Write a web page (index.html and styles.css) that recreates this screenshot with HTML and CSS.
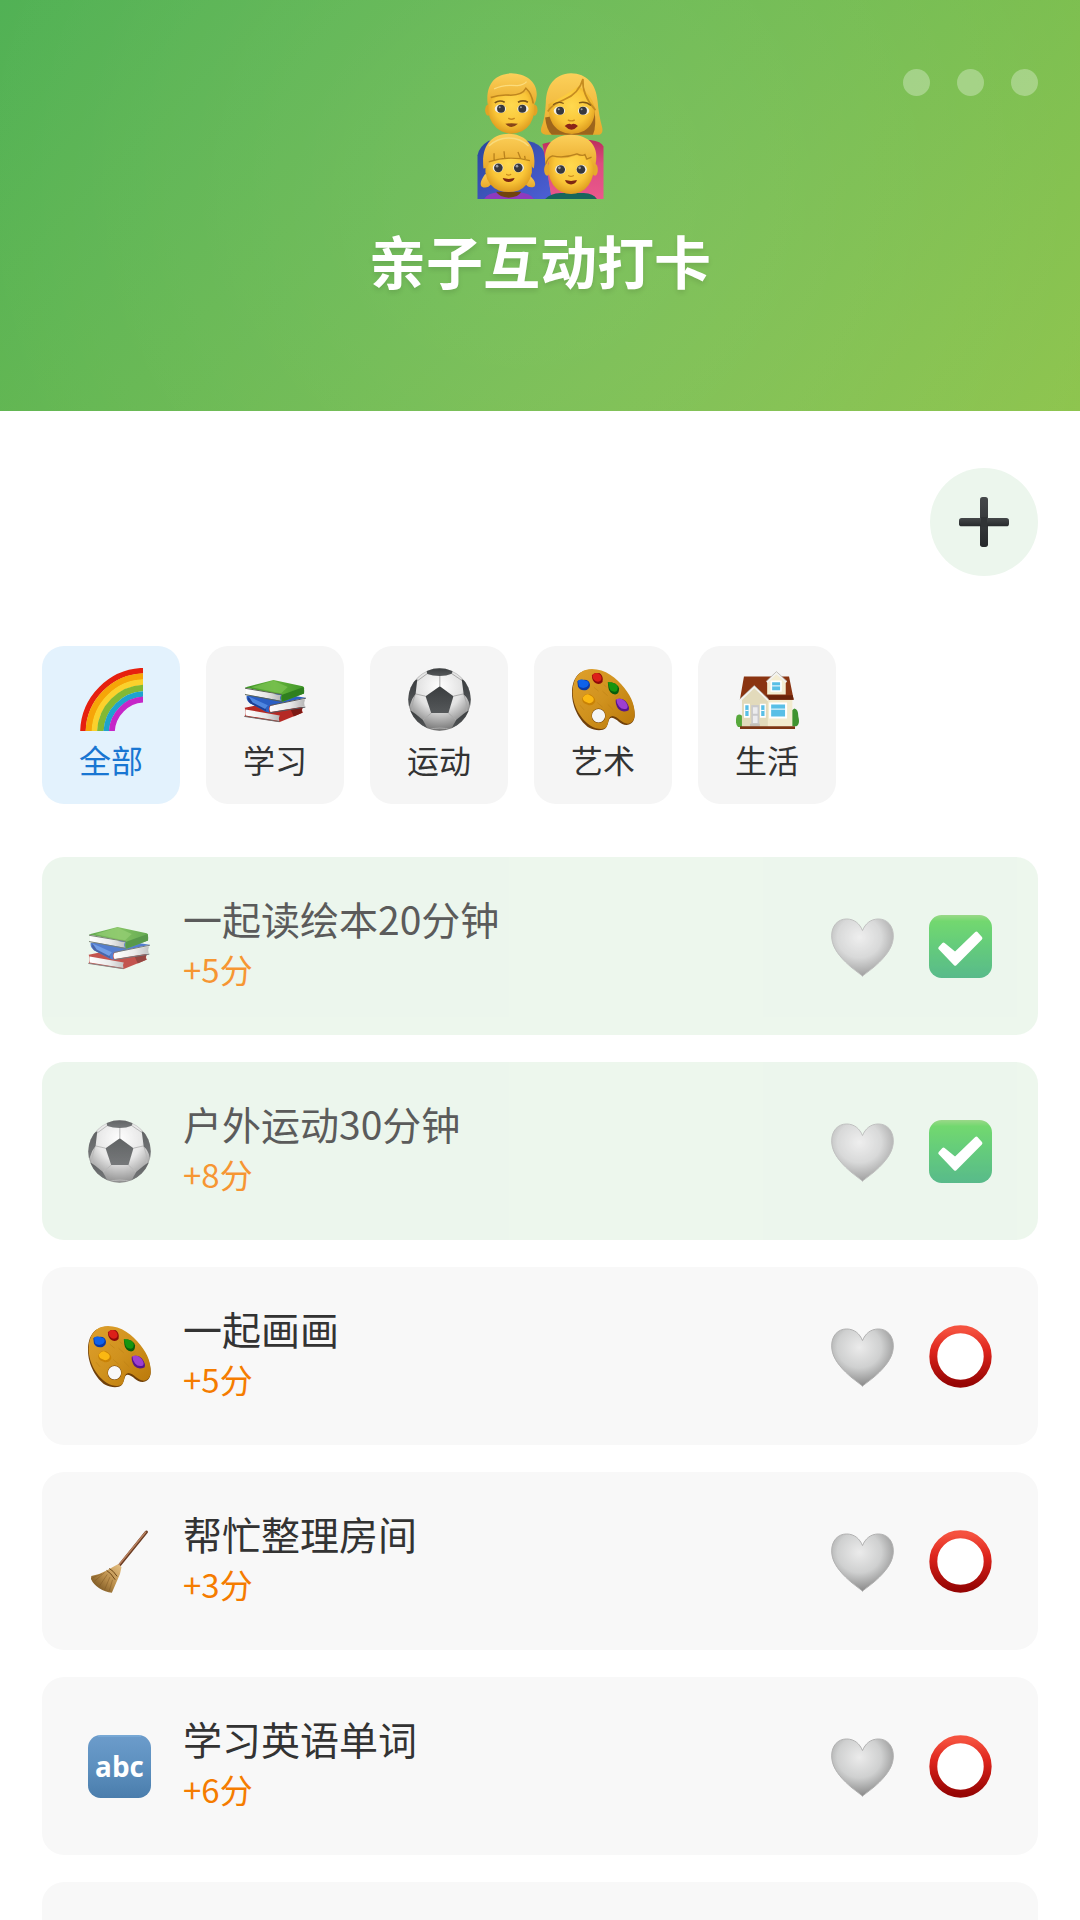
FILE: index.html
```html
<!DOCTYPE html>
<html lang="zh-CN">
<head>
    <meta charset="UTF-8">
    <meta name="viewport" content="width=device-width, initial-scale=1.0">
    <title>亲子互动打卡</title>
    <link rel="stylesheet" href="styles.css">
</head>
<body>
    <!-- shared icons -->
    <svg class="sprite" aria-hidden="true">
        <defs>
            <linearGradient id="g-check" x1="0" y1="0" x2="0" y2="1">
                <stop offset="0" stop-color="#82cf6c"/>
                <stop offset=".1" stop-color="#50cf4c"/>
                <stop offset=".45" stop-color="#40c15a"/>
                <stop offset="1" stop-color="#2faa6e"/>
            </linearGradient>
            <linearGradient id="g-ring" x1="0" y1="0" x2="0" y2="1">
                <stop offset="0" stop-color="#f5523f"/>
                <stop offset=".4" stop-color="#dd241c"/>
                <stop offset="1" stop-color="#960504"/>
            </linearGradient>
            <radialGradient id="g-heart" cx=".45" cy=".32" r=".65">
                <stop offset="0" stop-color="#ebebeb"/>
                <stop offset=".55" stop-color="#cfd0d0"/>
                <stop offset="1" stop-color="#8f8f8f"/>
            </radialGradient>
            <radialGradient id="g-ball" cx=".5" cy=".3" r=".72">
                <stop offset="0" stop-color="#ffffff"/>
                <stop offset=".5" stop-color="#e2e2e2"/>
                <stop offset="1" stop-color="#707070"/>
            </radialGradient>
            <linearGradient id="g-patch" x1="0" y1="0" x2="0" y2="1">
                <stop offset="0" stop-color="#3a3d3f"/>
                <stop offset="1" stop-color="#55585a"/>
            </linearGradient>
            <linearGradient id="g-wood" x1="0" y1="0" x2="1" y2="1">
                <stop offset="0" stop-color="#dfa02c"/>
                <stop offset=".5" stop-color="#d0921e"/>
                <stop offset="1" stop-color="#b97709"/>
            </linearGradient>
            <linearGradient id="g-page" x1="0" y1="0" x2="1" y2="0">
                <stop offset="0" stop-color="#ffffff"/>
                <stop offset=".6" stop-color="#e6e6e6"/>
                <stop offset="1" stop-color="#b4b4b4"/>
            </linearGradient>
            <linearGradient id="g-green" x1="0" y1="0" x2="1" y2="0">
                <stop offset="0" stop-color="#3a9424"/>
                <stop offset=".5" stop-color="#66b43c"/>
                <stop offset="1" stop-color="#3f9628"/>
            </linearGradient>
            <linearGradient id="g-plus" x1="0" y1="0" x2="0" y2="1">
                <stop offset="0" stop-color="#45484a"/>
                <stop offset="1" stop-color="#26292b"/>
            </linearGradient>
            <linearGradient id="g-abc" x1="0" y1="0" x2="0" y2="1">
                <stop offset="0" stop-color="#6c9ccb"/>
                <stop offset=".5" stop-color="#5d90bf"/>
                <stop offset="1" stop-color="#4a7dac"/>
            </linearGradient>
            <linearGradient id="g-straw" x1="1" y1="0" x2="0" y2="1">
                <stop offset="0" stop-color="#e6c184"/>
                <stop offset=".5" stop-color="#b98d4a"/>
                <stop offset="1" stop-color="#604012"/>
            </linearGradient>
            <radialGradient id="g-face" cx=".5" cy=".42" r=".62">
                <stop offset="0" stop-color="#ffd94f"/>
                <stop offset=".6" stop-color="#fac638"/>
                <stop offset="1" stop-color="#d8941a"/>
            </radialGradient>
            <linearGradient id="g-hair" x1="0" y1="0" x2="0" y2="1">
                <stop offset="0" stop-color="#fcd05a"/>
                <stop offset="1" stop-color="#e9a92a"/>
            </linearGradient>
            <linearGradient id="g-dad" x1="0" y1="0" x2="1" y2="1">
                <stop offset="0" stop-color="#2a479b"/>
                <stop offset="1" stop-color="#4d5fd6"/>
            </linearGradient>
            <linearGradient id="g-mom" x1="0" y1="0" x2="0" y2="1">
                <stop offset="0" stop-color="#bd2d5c"/>
                <stop offset=".4" stop-color="#dd4b80"/>
                <stop offset="1" stop-color="#ea588c"/>
            </linearGradient>
        </defs>

        <symbol id="i-rainbow" viewBox="0 0 190 192">
            <g fill="none">
                <circle cx="198" cy="198" r="190" stroke="#e6200f" stroke-width="17"/>
                <circle cx="198" cy="198" r="172" stroke="#f6a508" stroke-width="20"/>
                <circle cx="198" cy="198" r="155" stroke="#fbd12c" stroke-width="17"/>
                <circle cx="198" cy="198" r="137" stroke="#82b934" stroke-width="20"/>
                <circle cx="198" cy="198" r="119" stroke="#1ea3cf" stroke-width="17"/>
                <circle cx="198" cy="198" r="102" stroke="#c526c8" stroke-width="18"/>
            </g>
        </symbol>

        <symbol id="i-books" viewBox="0 0 190 190">
            <path fill="#b52a24" d="M2 120L60 108L178 118Q172 128 178 134L108 163L2 146Q8 134 2 120Z"/>
            <path fill="#7c1a14" d="M140 124L178 118Q171 127 176 135L150 146Z"/>
            <path fill="url(#g-page)" d="M5 125L108 143Q103 152 107 160L5 143Z"/>
            <path fill="none" stroke="#6d6a69" stroke-width="3" d="M1 146L107 162"/>
            <path fill="#2b5fc4" d="M8 84L110 78L186 90L78 114Q72 124 78 135L66 132L18 106Q6 98 8 84Z"/>
            <path fill="#1d3f93" d="M12 88L68 116Q64 124 68 132L18 106Q10 98 12 88Z"/>
            <path fill="#4f86e0" d="M14 86L72 112L64 124L26 104Z"/>
            <path fill="url(#g-page)" d="M80 114L184 94Q180 104 183 116L80 133Q74 123 80 114Z"/>
            <path fill="none" stroke="#55595f" stroke-width="3" d="M78 135L185 118M78 113L187 91"/>
            <path fill="url(#g-green)" d="M2 59L89 36L177 55Q183 57 181 64V77L116 102Q108 94 114 81Z"/>
            <path fill="#2f801f" d="M115 81L178 58Q183 62 181 77L116 102Q110 91 115 81Z"/>
            <path fill="#7cc352" opacity=".7" d="M22 58L89 38L132 57L112 76Z"/>
            <path fill="url(#g-page)" d="M6 64L112 82Q106 90 112 99L6 80Z"/>
            <path fill="none" stroke="#5b6354" stroke-width="3" d="M3 61L114 80M3 80L114 101"/>
        </symbol>

        <symbol id="i-ball" viewBox="0 0 190 190">
            <clipPath id="ball-clip"><circle cx="95" cy="95" r="94"/></clipPath>
            <circle cx="95" cy="95" r="94" fill="url(#g-ball)"/>
            <g clip-path="url(#ball-clip)">
                <path fill="none" stroke="#a9a9a9" stroke-width="3" d="M96 55V24M137 85L168 78M122 136L146 158M70 136L44 158M53 85L22 78M58 17L24 42M132 17L166 40M22 78Q12 100 12 132M168 78Q180 104 176 132M44 158Q28 150 12 134M146 158Q164 150 178 134M62 186Q96 176 130 186"/>
                <g fill="url(#g-patch)">
                    <path d="M96 55L137 85L122 136H70L53 85Z"/>
                    <path d="M54 0H138L132 17Q116 24 96 24Q74 24 58 18Z"/>
                    <path d="M162 34L200 50V120L186 112Q182 92 168 80Z"/>
                    <path d="M28 34L-6 50V120L5 114Q10 94 23 78Z"/>
                    <path d="M8 128Q24 138 44 156Q52 168 60 186L30 190L0 150Z"/>
                    <path d="M182 128Q166 138 146 156Q138 168 130 186L160 190L190 150Z"/>
                </g>
            </g>
            <circle cx="95" cy="95" r="93" fill="none" stroke="#555" stroke-opacity=".35" stroke-width="2"/>
        </symbol>

        <symbol id="i-palette" viewBox="0 0 190 190">
            <path fill="#70400a" fill-rule="evenodd" d="M58 5C100 5 132 32 156 62C180 92 190 120 189 145C188 162 178 172 164 172C146 172 136 152 120 150C108 150 112 168 102 181C92 191 68 189 52 180C26 164 0 120 0 76C0 32 20 5 58 5ZM80 124A20 20 0 1 0 80 164A20 20 0 1 0 80 124Z"/>
            <path fill="url(#g-wood)" fill-rule="evenodd" d="M60 3C100 3 134 30 158 60C182 90 190 118 189 142C188 158 180 168 168 168C150 168 138 146 122 145C108 146 112 164 104 178C96 187 74 185 56 174C30 158 2 118 2 72C2 28 24 3 60 3ZM80 122A20 21 0 1 0 80 166A20 21 0 1 0 80 122Z"/>
            <g stroke="#b67b12" stroke-width="2" opacity=".6">
                <path d="M66 58L80 70M92 70L108 84M76 104L92 118M108 110L124 126M24 112L36 126M130 92L142 80M96 50L104 58"/>
            </g>
            <path fill="#0c3aa4" d="M16 40Q24 34 34 36Q50 34 54 48Q56 60 44 66Q24 70 18 56Z"/>
            <path fill="#0f62ea" d="M18 38Q30 32 40 38Q52 40 50 50Q46 60 34 60Q20 60 20 50Z"/>
            <path fill="#8c0a0a" d="M60 22Q68 12 84 16Q96 26 92 42Q84 52 72 46Q60 40 60 22Z"/>
            <path fill="#dc2019" d="M62 20Q72 12 82 18Q92 26 88 36Q82 44 72 40Q60 32 62 20Z"/>
            <path fill="#0a5c0c" d="M108 44L120 44Q140 50 142 62Q142 80 130 80Q112 76 110 60Z"/>
            <path fill="#17950f" d="M108 42L120 44Q136 48 138 58Q138 72 128 72Q114 70 112 58Z"/>
            <path fill="#c98205" d="M30 92Q40 74 56 80Q72 90 70 102Q60 118 46 110Q32 108 30 92Z"/>
            <path fill="#fbb812" d="M32 90Q42 74 54 82Q70 90 64 100Q54 110 46 104Q34 102 32 90Z"/>
            <path fill="#57158c" d="M132 96Q148 88 162 100Q176 118 170 128Q152 136 140 124Q130 110 132 96Z"/>
            <path fill="#9d3fd0" d="M134 94Q148 88 160 100Q172 114 166 122Q152 128 142 116Q134 108 134 94Z"/>
        </symbol>

        <symbol id="i-house" viewBox="0 0 190 190">
            <path fill="#3f9330" d="M176 122Q188 124 188 146Q194 170 182 176H166V130Z"/>
            <path fill="#57a83c" d="M2 144Q12 136 20 146V178H6Q-4 168 2 144Z"/>
            <path fill="#f2ebcf" d="M18 90H170V180H18Z"/>
            <path fill="#8a3411" d="M24 26H160L174 96H96L56 54L12 94Z"/>
            <path fill="#6a230a" d="M90 82H171L174 96H98Z"/>
            <path fill="#e2dabb" d="M18 94L55 58L96 96V180H18Z"/>
            <path fill="#f4edd2" d="M94 42L122 18L150 42V80H94Z"/>
            <path fill="none" stroke="#f3f3f0" stroke-width="6" d="M13 97L55 57L97 97M93 43L122 15L152 43"/>
            <path fill="none" stroke="#a8a6a0" stroke-width="2" d="M11 94L55 53L98 93M91 40L122 11L154 40"/>
            <g fill="#fff">
                <path d="M104 38H138V72H104ZM100 104H154V152H100ZM24 108H42V150H24ZM72 108H90V150H72Z"/>
            </g>
            <g fill="#59bfe6">
                <path d="M109 43H133V67H109ZM106 110H148V146H106ZM28 112H38V145H28ZM76 112H86V145H76Z"/>
            </g>
            <path stroke="#fff" stroke-width="3" d="M106 124H148M109 54H133M28 128H38M76 128H86"/>
            <path fill="#c9c9cb" d="M46 112H70V172H46Z"/>
            <path fill="#ececee" d="M51 118H65V138H51ZM51 144H65V166H51Z"/>
            <path fill="#c4c0b8" d="M42 168H72V178H42Z"/>
            <path fill="#7c3514" d="M12 176H178V184H12Z"/>
        </symbol>

        <symbol id="i-broom" viewBox="0 0 190 190">
            <path stroke="#6b3c23" stroke-width="9" stroke-linecap="round" d="M176 6L96 105"/>
            <path stroke="#bb8461" stroke-width="4" stroke-linecap="round" d="M174 6L94 104"/>
            <path fill="url(#g-straw)" d="M90 103Q97 104 101 112Q99 130 88 152L72 189Q52 188 34 176Q16 164 9 148L10 139Q36 134 56 122Z"/>
            <path fill="none" stroke="#6e4817" stroke-width="3" d="M64 116Q76 122 88 140M56 122Q68 128 82 150"/>
            <path fill="none" stroke="#7b5520" stroke-width="2" opacity=".7" d="M50 128L20 154M58 134L34 170M66 142L50 180M74 150L64 184M42 132L14 144"/>
        </symbol>

        <symbol id="i-abc" viewBox="0 0 190 190">
            <rect width="190" height="190" rx="38" fill="url(#g-abc)"/>
            <path fill="none" stroke="#8fc1ea" stroke-width="3" stroke-opacity=".7" d="M30 3H160"/>
            <text class="abc-text" x="95" y="128" text-anchor="middle">abc</text>
        </symbol>

        <symbol id="i-heart" viewBox="0 0 190 190">
            <path fill="url(#g-heart)" stroke="#b0b0b0" stroke-width="3" d="M95 185C88 177 66 164 44 142C18 116 2 92 2 63C2 32 21 12 47 12C71 12 87 27 95 47C103 27 119 12 143 12C169 12 188 32 188 63C188 92 172 116 146 142C124 164 102 177 95 185Z"/>
        </symbol>

        <symbol id="i-check" viewBox="0 0 190 190">
            <rect width="190" height="190" rx="38" fill="url(#g-check)"/>
            <path fill="#fff" stroke="#fff" stroke-width="10" stroke-linejoin="round" d="M33 100L44 88L79 117L143 55L156 70L79 148Z"/>
        </symbol>

        <symbol id="i-ring" viewBox="0 0 190 190">
            <circle cx="95" cy="95" r="82" fill="#fff" stroke="url(#g-ring)" stroke-width="24"/>
        </symbol>

        <symbol id="i-plus" viewBox="0 0 150 150">
            <rect x="63" width="24" height="150" rx="8" fill="url(#g-plus)"/>
            <rect y="63" width="150" height="25" rx="8" fill="url(#g-plus)"/>
            <rect x="66" y="60" width="18" height="30" fill="#303335"/>
        </symbol>

        <symbol id="i-family" viewBox="0 0 380 380">
            <!-- clothes -->
            <path fill="url(#g-dad)" d="M0 380V248Q4 222 34 204H150Q192 212 202 240L224 380Z"/>
            <path fill="url(#g-mom)" d="M196 214Q240 200 340 202Q374 206 380 222V380H224Z"/>
            <!-- dad -->
            <ellipse cx="32" cy="112" rx="9" ry="17" fill="#e2a225"/>
            <ellipse cx="172" cy="112" rx="9" ry="17" fill="#e2a225"/>
            <path fill="url(#g-face)" d="M33 76Q36 36 102 36Q168 36 171 76V118Q166 158 134 176Q102 190 72 176Q38 156 33 118Z"/>
            <path fill="url(#g-hair)" d="M30 88C26 30 56 2 102 1C146 2 184 28 178 72Q176 92 168 96Q166 66 150 52Q138 68 98 68Q60 66 42 74Q34 84 32 100Z"/>
            <path fill="none" stroke="#bf861e" stroke-width="5" d="M40 74Q68 64 100 67Q136 66 146 46Q164 62 168 92"/>
            <path fill="none" stroke="#fbdc7c" stroke-width="4" d="M50 48Q78 34 120 38Q140 36 148 26"/>
            <path fill="none" stroke="#7e5716" stroke-width="5" d="M52 90Q66 80 82 88M122 88Q138 80 152 88"/>
            <!-- mum -->
            <path fill="url(#g-hair)" d="M282 1C232 4 208 36 206 90Q204 136 192 166Q188 184 206 186H368Q380 182 376 164Q366 130 362 84C358 34 330 2 282 1Z"/>
            <path fill="#9d651c" d="M204 134Q208 172 224 186H348Q360 162 352 106Z"/>
            <path fill="url(#g-face)" d="M214 94Q262 70 306 40Q344 66 354 104Q356 152 322 174Q284 194 248 174Q212 152 214 94Z"/>
            <path fill="none" stroke="#c68c20" stroke-width="5" d="M212 116Q224 96 262 80Q306 62 318 18Q314 66 356 112"/>
            <path fill="none" stroke="#7e5716" stroke-width="4" d="M228 96Q242 84 260 92M306 90Q326 84 342 98"/>
            <!-- girl -->
            <path fill="url(#g-hair)" d="M22 306Q4 332 12 342Q28 352 42 334L36 300ZM154 306Q180 328 172 342Q156 350 144 334Z"/>
            <path fill="#8e3abe" d="M20 380Q30 362 64 360H124Q158 362 170 380Z"/>
            <path fill="#70430f" d="M56 358H132Q124 374 94 376Q66 374 56 358Z"/>
            <path fill="url(#g-face)" d="M24 258Q28 214 94 212Q160 214 164 258V300Q156 340 124 354Q94 364 64 354Q30 340 24 300Z"/>
            <path fill="url(#g-hair)" d="M18 288C10 216 44 184 94 183C146 184 180 220 170 288Q162 286 158 262Q92 246 36 266Q32 288 18 288Z"/>
            <path fill="none" stroke="#b9821d" stroke-width="4" d="M34 268Q92 248 158 264M50 262V242M82 256L80 236M130 258L122 238M144 260L142 250"/>
            <path fill="none" stroke="#f9db7c" stroke-width="4" d="M34 220Q60 196 94 196Q130 196 154 220"/>
            <!-- boy -->
            <path fill="#17665c" d="M204 380Q220 364 250 362H320Q350 364 360 380Z"/>
            <ellipse cx="210" cy="292" rx="9" ry="18" fill="#e6a92c"/>
            <ellipse cx="354" cy="292" rx="9" ry="18" fill="#e6a92c"/>
            <path fill="url(#g-face)" d="M214 262Q220 218 282 218Q344 218 350 262V302Q340 344 312 358Q282 372 252 358Q222 342 214 302Z"/>
            <path fill="url(#g-hair)" d="M208 284C190 220 230 186 282 186C336 186 372 222 354 284Q346 278 344 264Q340 250 326 262L322 248Q310 254 300 248Q258 264 222 252Q214 266 208 284Z"/>
            <path fill="none" stroke="#b9821d" stroke-width="4" d="M206 274Q212 254 226 250Q262 258 300 244Q316 252 324 246L330 260L344 254"/>
            <!-- eyes -->
            <g fill="#f3efe6">
                <ellipse cx="69" cy="108" rx="17" ry="13"/><ellipse cx="137" cy="108" rx="17" ry="13"/>
                <ellipse cx="247" cy="114" rx="17" ry="13"/><ellipse cx="320" cy="114" rx="17" ry="13"/>
                <ellipse cx="62" cy="286" rx="16" ry="14"/><ellipse cx="124" cy="286" rx="16" ry="14"/>
                <ellipse cx="250" cy="291" rx="16" ry="14"/><ellipse cx="314" cy="291" rx="16" ry="14"/>
            </g>
            <g fill="#37383d">
                <circle cx="71" cy="108" r="12"/><circle cx="135" cy="108" r="12"/>
                <circle cx="249" cy="114" r="12"/><circle cx="318" cy="114" r="12"/>
                <circle cx="63" cy="286" r="13"/><circle cx="123" cy="286" r="13"/>
                <circle cx="251" cy="291" r="13"/><circle cx="312" cy="291" r="13"/>
            </g>
            <g fill="#9b9ca2">
                <circle cx="67" cy="103" r="3"/><circle cx="131" cy="103" r="3"/>
                <circle cx="245" cy="109" r="3"/><circle cx="314" cy="109" r="3"/>
                <circle cx="59" cy="281" r="4"/><circle cx="119" cy="281" r="4"/>
                <circle cx="247" cy="286" r="4"/><circle cx="308" cy="286" r="4"/>
            </g>
            <path fill="none" stroke="#c98a1e" stroke-width="4" stroke-linecap="round" d="M94 137Q102 142 111 137M274 142Q283 147 292 142M88 306Q94 310 100 306M275 310Q282 314 289 310"/>
            <path fill="#874518" d="M84 153Q102 150 122 153Q102 172 84 153Z"/>
            <path fill="#8a2418" d="M263 160Q274 150 283 155Q292 150 303 160Q284 182 263 160Z"/>
            <path fill="#7d2611" d="M76 317Q94 322 112 317Q108 329 94 329Q80 329 76 317ZM264 323Q282 328 300 323Q296 336 282 336Q268 336 264 323Z"/>
        </symbol>
    </svg>

    <div class="app">
        <header class="header">
            <svg class="header-icon" role="img" aria-label="家庭"><use href="#i-family"/></svg>
            <h1 class="header-title">亲子互动打卡</h1>
            <div class="header-dots">
                <span class="dot"></span>
                <span class="dot"></span>
                <span class="dot"></span>
            </div>
        </header>

        <main class="content">
            <div class="toolbar">
                <button class="add-btn" type="button" aria-label="添加"><svg class="plus-icon"><use href="#i-plus"/></svg></button>
            </div>

            <nav class="tabs">
                <button class="tab active" type="button"><svg class="icon"><use href="#i-rainbow"/></svg><span>全部</span></button>
                <button class="tab" type="button"><svg class="icon"><use href="#i-books"/></svg><span>学习</span></button>
                <button class="tab" type="button"><svg class="icon"><use href="#i-ball"/></svg><span>运动</span></button>
                <button class="tab" type="button"><svg class="icon"><use href="#i-palette"/></svg><span>艺术</span></button>
                <button class="tab" type="button"><svg class="icon"><use href="#i-house"/></svg><span>生活</span></button>
            </nav>

            <ul class="task-list">
                <li class="task done">
                    <svg class="icon"><use href="#i-books"/></svg>
                    <div class="task-info">
                        <label class="task-name" for="task1">一起读绘本20分钟</label>
                        <span class="task-points">+5分</span>
                    </div>
                    <button class="like-btn" type="button" aria-label="喜欢"><svg class="icon"><use href="#i-heart"/></svg></button>
                    <span class="check">
                        <input type="checkbox" id="task1" checked>
                        <svg class="icon icon-on"><use href="#i-check"/></svg>
                        <svg class="icon icon-off"><use href="#i-ring"/></svg>
                    </span>
                </li>
                <li class="task done">
                    <svg class="icon"><use href="#i-ball"/></svg>
                    <div class="task-info">
                        <label class="task-name" for="task2">户外运动30分钟</label>
                        <span class="task-points">+8分</span>
                    </div>
                    <button class="like-btn" type="button" aria-label="喜欢"><svg class="icon"><use href="#i-heart"/></svg></button>
                    <span class="check">
                        <input type="checkbox" id="task2" checked>
                        <svg class="icon icon-on"><use href="#i-check"/></svg>
                        <svg class="icon icon-off"><use href="#i-ring"/></svg>
                    </span>
                </li>
                <li class="task">
                    <svg class="icon"><use href="#i-palette"/></svg>
                    <div class="task-info">
                        <label class="task-name" for="task3">一起画画</label>
                        <span class="task-points">+5分</span>
                    </div>
                    <button class="like-btn" type="button" aria-label="喜欢"><svg class="icon"><use href="#i-heart"/></svg></button>
                    <span class="check">
                        <input type="checkbox" id="task3">
                        <svg class="icon icon-on"><use href="#i-check"/></svg>
                        <svg class="icon icon-off"><use href="#i-ring"/></svg>
                    </span>
                </li>
                <li class="task">
                    <svg class="icon"><use href="#i-broom"/></svg>
                    <div class="task-info">
                        <label class="task-name" for="task4">帮忙整理房间</label>
                        <span class="task-points">+3分</span>
                    </div>
                    <button class="like-btn" type="button" aria-label="喜欢"><svg class="icon"><use href="#i-heart"/></svg></button>
                    <span class="check">
                        <input type="checkbox" id="task4">
                        <svg class="icon icon-on"><use href="#i-check"/></svg>
                        <svg class="icon icon-off"><use href="#i-ring"/></svg>
                    </span>
                </li>
                <li class="task">
                    <svg class="icon"><use href="#i-abc"/></svg>
                    <div class="task-info">
                        <label class="task-name" for="task5">学习英语单词</label>
                        <span class="task-points">+6分</span>
                    </div>
                    <button class="like-btn" type="button" aria-label="喜欢"><svg class="icon"><use href="#i-heart"/></svg></button>
                    <span class="check">
                        <input type="checkbox" id="task5">
                        <svg class="icon icon-on"><use href="#i-check"/></svg>
                        <svg class="icon icon-off"><use href="#i-ring"/></svg>
                    </span>
                </li>
                <li class="task"></li>
            </ul>
        </main>
    </div>
</body>
</html>
```

FILE: styles.css
```css
* {
    box-sizing: border-box;
}
body {
    margin: 0;
    background: #fff;
    color: #333;
    font-family: "Noto Sans CJK SC", "Noto Sans", sans-serif;
}
button {
    border: 0;
    padding: 0;
    background: none;
    color: inherit;
    font: inherit;
    cursor: pointer;
}
svg {
    display: block;
}
.sprite {
    position: absolute;
    width: 0;
    height: 0;
}
.app {
    height: 100vh;
    overflow: hidden;
}

/* Header */
.header {
    position: relative;
    display: flex;
    flex-direction: column;
    align-items: center;
    gap: 20px;
    padding: 73px 42px 112px;
    /* soft glow over the green */
    background:
        radial-gradient(circle 800px, rgba(255, 255, 255, 0.1), transparent),
        linear-gradient(135deg, #4caf50, #8bc34a);
}
.header-icon {
    width: 127px;
    height: 126px;
}
.header-title {
    margin: 0;
    color: #fff;
    font-size: 57px;
    font-weight: 700;
    line-height: 80px;
    text-shadow: 0 3px 5px rgba(0, 0, 0, 0.1);
}
.header-dots {
    position: absolute;
    top: 69px;
    right: 42px;
    display: flex;
    gap: 27px;
}
.dot {
    width: 27px;
    height: 27px;
    border-radius: 50%;
    background: rgba(255, 255, 255, 0.3);
}

/* Content */
.content {
    padding: 57px 42px;
}
.toolbar {
    display: flex;
    justify-content: flex-end;
    margin-bottom: 70px;
}
.add-btn {
    display: flex;
    align-items: center;
    justify-content: center;
    width: 108px;
    height: 108px;
    border-radius: 50%;
    background: #ecf6ed;
}
.plus-icon {
    width: 50px;
    height: 50px;
}
.icon {
    flex: none;
    width: 63px;
    height: 63px;
}

/* Category tabs */
.tabs {
    display: flex;
    gap: 26px;
    margin-bottom: 53px;
}
.tab {
    display: flex;
    flex-direction: column;
    align-items: center;
    gap: 6px;
    padding: 22px 37px 23px;
    border-radius: 22px;
    background: #f5f5f5;
    font-size: 32px;
    line-height: 44px;
}
.tab.active {
    background: #e3f2fd;
    color: #1976d2;
}

/* Task cards */
.task-list {
    display: flex;
    flex-direction: column;
    gap: 27px;
    margin: 0;
    padding: 0;
    list-style: none;
}
.task {
    display: flex;
    align-items: center;
    min-height: 178px;
    padding: 36px 46px;
    border-radius: 22px;
    background: #f8f8f8;
}
.task.done {
    background: #e8f5e9;
    opacity: 0.8;
}
.task-info {
    display: flex;
    flex: 1;
    flex-direction: column;
    align-items: flex-start;
    margin-left: 32px;
    padding-bottom: 4px;
    line-height: 51px;
}
.task-name {
    font-size: 39px;
}
.task-points {
    color: #f57c00;
    font-size: 33px;
}
.check {
    display: grid;
    margin-left: 35px;
}
.check input,
.check .icon {
    grid-area: 1 / 1;
}
.check input {
    width: 63px;
    height: 63px;
    margin: 0;
    opacity: 0;
}
.check .icon {
    pointer-events: none;
}
.check input:checked ~ .icon-off,
.check input:not(:checked) ~ .icon-on {
    visibility: hidden;
}

/* abc tile */
.abc-text {
    fill: #fff;
    font-family: "Open Sans", sans-serif;
    font-size: 84px;
    font-weight: 700;
}
```
